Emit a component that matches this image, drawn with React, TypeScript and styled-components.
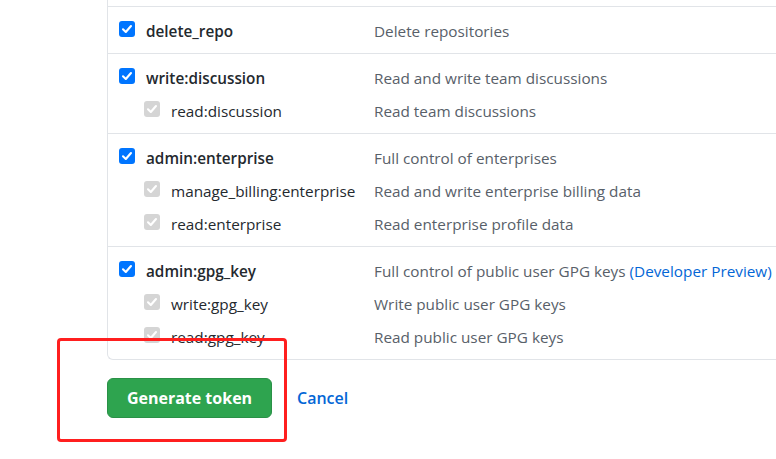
import React from "react";
import styled, { createGlobalStyle } from "styled-components";

const GlobalStyle = createGlobalStyle`
	html, body {
		margin: 0;
		padding: 0;
		background: #ffffff;
		overflow: hidden;
	}
	body {
		font-family: "Open Sans", "Noto Sans", "Liberation Sans", sans-serif;
		color: #24292e;
	}
`;

const Page = styled.div`
	position: relative;
	width: 776px;
	height: 459px;
	padding-left: 107px;
	box-sizing: border-box;
`;

const ScopeBox = styled.div`
	width: 700px;
	padding-top: 6px;
	border-left: 1px solid #e1e4e8;
	border-bottom: 1px solid #e1e4e8;
	border-bottom-left-radius: 6px;
`;

const Group = styled.div`
	border-top: 1px solid #e1e4e8;
	padding: 8px 0 5px 11px;
`;

const Row = styled.div`
	display: grid;
	grid-template-columns: 255px 1fr;
	line-height: 33px;
	font-size: 15.3px;
	white-space: nowrap;
`;

const NameCell = styled.div<{ $child?: boolean }>`
	display: flex;
	align-items: flex-start;
	gap: 11px;
	padding-left: ${(p) => (p.$child ? "25px" : "0")};
	font-weight: ${(p) => (p.$child ? 400 : 600)};
	color: #24292e;
`;

const Desc = styled.div`
	color: #586069;
`;

const PreviewLink = styled.span`
	color: #0366d6;
`;

const Check = styled.span<{ $disabled?: boolean }>`
	display: inline-flex;
	align-items: center;
	justify-content: center;
	flex: none;
	width: 16px;
	height: 16px;
	margin-top: 6px;
	border-radius: 3px;
	background: ${(p) => (p.$disabled ? "#d5d5d5" : "#0075ff")};
`;

const Actions = styled.div`
	display: flex;
	align-items: center;
	gap: 25px;
	margin-top: 18px;
`;

const GreenButton = styled.button`
	width: 165px;
	height: 40px;
	border: 1px solid #2a9147;
	border-radius: 6px;
	background: #2ea44f;
	color: #ffffff;
	font-family: "Open Sans", "Noto Sans", "Liberation Sans", sans-serif;
	font-size: 16px;
	font-weight: 700;
	cursor: pointer;
`;

const CancelLink = styled.a`
	color: #0366d6;
	font-size: 16px;
	font-weight: 600;
	text-decoration: none;
`;

const Annotation = styled.div`
	position: absolute;
	left: 57px;
	top: 338px;
	width: 224px;
	height: 98px;
	border: 3px solid #ff1f1f;
	border-radius: 4px;
`;

type Scope = {
	name: string;
	description: React.ReactNode;
	children?: { name: string; description: string }[];
};

const scopes: Scope[] = [
	{ name: "delete_repo", description: "Delete repositories" },
	{
		name: "write:discussion",
		description: "Read and write team discussions",
		children: [{ name: "read:discussion", description: "Read team discussions" }],
	},
	{
		name: "admin:enterprise",
		description: "Full control of enterprises",
		children: [
			{ name: "manage_billing:enterprise", description: "Read and write enterprise billing data" },
			{ name: "read:enterprise", description: "Read enterprise profile data" },
		],
	},
	{
		name: "admin:gpg_key",
		description: (
			<>
				Full control of public user GPG keys <PreviewLink>(Developer Preview)</PreviewLink>
			</>
		),
		children: [
			{ name: "write:gpg_key", description: "Write public user GPG keys" },
			{ name: "read:gpg_key", description: "Read public user GPG keys" },
		],
	},
];

const CheckBox = ({ disabled }: { disabled?: boolean }) => (
	<Check $disabled={disabled}>
		<svg width="12" height="12" viewBox="0 0 12 12">
			<path
				d="M2 6.3 L4.8 9 L10 3"
				fill="none"
				stroke="#ffffff"
				strokeWidth="2.1"
				strokeLinecap="round"
				strokeLinejoin="round"
			/>
		</svg>
	</Check>
);

const App = () => {
	return (
		<>
			<GlobalStyle />
			<Page>
				<ScopeBox>
					{scopes.map((scope) => (
						<Group key={scope.name}>
							<Row>
								<NameCell>
									<CheckBox />
									{scope.name}
								</NameCell>
								<Desc>{scope.description}</Desc>
							</Row>
							{scope.children?.map((child) => (
								<Row key={child.name}>
									<NameCell $child>
										<CheckBox disabled />
										{child.name}
									</NameCell>
									<Desc>{child.description}</Desc>
								</Row>
							))}
						</Group>
					))}
				</ScopeBox>
				<Actions>
					<GreenButton>Generate token</GreenButton>
					<CancelLink href="#">Cancel</CancelLink>
				</Actions>
				<Annotation />
			</Page>
		</>
	);
};

export default App;
